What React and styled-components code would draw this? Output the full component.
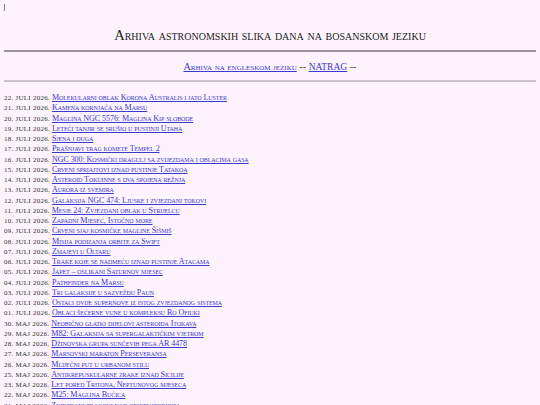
import React from 'react';
import styled, { createGlobalStyle } from 'styled-components';

const GlobalStyle = createGlobalStyle`
  body {
    margin: 0;
    background: #fdf3fd;
    font-family: "Liberation Serif", "DejaVu Serif", serif;
    color: #2a2a2a;
  }
`;

const Page = styled.div`
  padding: 4px 4px 0;
`;

const TopMark = styled.span`
  display: block;
  width: 1px;
  height: 7px;
  background: #8a7f8a;
`;

const Title = styled.h1`
  margin: 15px 0 0;
  text-align: center;
  font-size: 14.6px;
  font-weight: normal;
  font-variant: small-caps;
  line-height: 18px;
  color: #222;
`;

const Rule = styled.div`
  margin-top: ${(p) => p.gap}px;
  height: ${(p) => p.thick}px;
  background: ${(p) => p.color};
`;

const Nav = styled.div`
  margin-top: 8px;
  text-align: center;
  font-size: 10.2px;
  line-height: 14px;
  color: #444;
`;

const NavLink = styled.a`
  color: #3a3acb;
  text-decoration: underline;
  font-variant: small-caps;
`;

const BackLink = styled.a`
  color: #3a3acb;
  text-decoration: underline;
  font-size: 9.5px;
`;

const List = styled.div`
  margin-top: 11px;
  font-size: 8.1px;
  line-height: 10.25px;
  font-variant: small-caps;
`;

const Row = styled.div`
  white-space: nowrap;
`;

const DateText = styled.span`
  color: #333;
  font-size: 7px;
  text-transform: uppercase;
  letter-spacing: 0.25px;
`;

const Item = styled.a`
  color: #3a3acb;
  text-decoration: underline;
  letter-spacing: -0.1px;
`;

const entries = [
  ['22. juli 2026.', 'Molekularni oblak Korona Australis i jato Luster'],
  ['21. juli 2026.', 'Kamena kornjača na Marsu'],
  ['20. juli 2026.', 'Maglina NGC 5576: Maglina Kip slobode'],
  ['19. juli 2026.', 'Leteći tanjir se srušio u pustinji Utaha'],
  ['18. juli 2026.', 'Sjena i duga'],
  ['17. juli 2026.', 'Prašnjavi trag komete Tempel 2'],
  ['16. juli 2026.', 'NGC 300: Kosmički dragulj sa zvijezdama i oblacima gasa'],
  ['15. juli 2026.', 'Crveni spriajtovi iznad pustinje Tatakoa'],
  ['14. juli 2026.', 'Asteroid Tokuinne s dva spojena režnja'],
  ['13. juli 2026.', 'Aurora iz svemira'],
  ['12. juli 2026.', 'Galaksija NGC 474: Ljuske i zvjezdani tokovi'],
  ['11. juli 2026.', 'Mesje 24: Zvjezdani oblak u Strijelcu'],
  ['10. juli 2026.', 'Zapadni Mjesec, Istočno more'],
  ['09. juli 2026.', 'Crveni sjaj kosmičke magline Šišmiš'],
  ['08. juli 2026.', 'Misija podizanja orbite za Swift'],
  ['07. juli 2026.', 'Zmajevi u Oltaru'],
  ['06. juli 2026.', 'Trake koje se nadmeću iznad pustinje Atacama'],
  ['05. juli 2026.', 'Japet – oslikani Saturnov mjesec'],
  ['04. juli 2026.', 'Pathfinder na Marsu'],
  ['03. juli 2026.', 'Tri galaksije u sazvežđu Paun'],
  ['02. juli 2026.', 'Ostaci dvije supernove iz istog zvjezdanog sistema'],
  ['01. juli 2026.', 'Oblaci šećerne vune u kompleksu Ro Ofiuki'],
  ['30. maj 2026.', 'Neobično glatki dijelovi asteroida Itokava'],
  ['29. maj 2026.', 'M82: Galaksija sa supergalaktičkim vjetrom'],
  ['28. maj 2026.', 'Džinovska grupa sunčevih pega AR 4478'],
  ['27. maj 2026.', 'Marsovski maraton Perseveransa'],
  ['26. maj 2026.', 'Mliječni put u urbanom stilu'],
  ['25. maj 2026.', 'Antikrepuskularne zrake iznad Sicilije'],
  ['23. maj 2026.', 'Let pored Tritona, Neptunovog mjeseca'],
  ['22. maj 2026.', 'M25: Maglina Bućica'],
  ['21. maj 2026.', 'Zvjezdani tragovi nad opservatorijom'],
];

export default function App() {
  return (
    <Page>
      <GlobalStyle />
      <TopMark />
      <Title>Arhiva astronomskih slika dana na bosanskom jeziku</Title>
      <Rule gap={6} thick={1.5} color="#9a929a" />
      <Nav>
        <NavLink href="#">Arhiva na engleskom jeziku</NavLink> --{' '}
        <BackLink href="#">NATRAG</BackLink> --
      </Nav>
      <Rule gap={6.5} thick={2} color="#cbc3cb" />
      <List>
        {entries.map(([date, title]) => (
          <Row key={date}>
            <DateText>{date}</DateText> <Item href="#">{title}</Item>
          </Row>
        ))}
      </List>
    </Page>
  );
}
